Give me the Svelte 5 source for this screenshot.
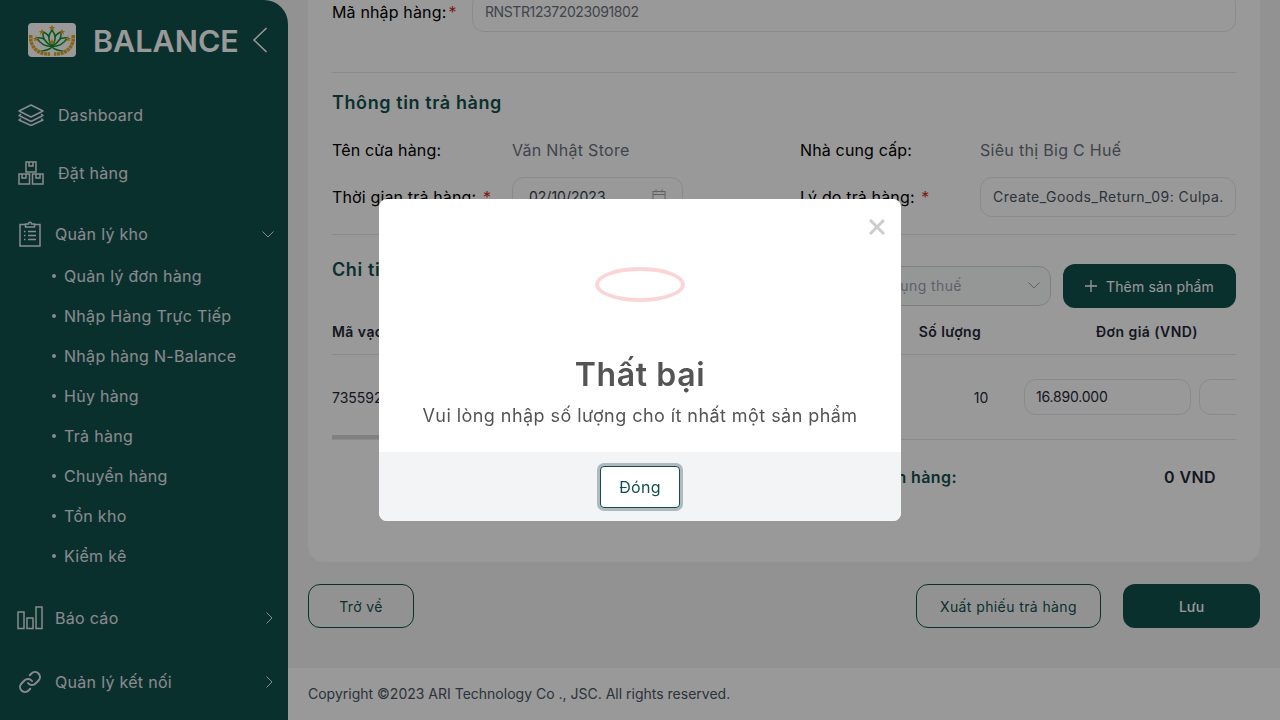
<script lang="ts">
	const subItems = ['Quản lý đơn hàng', 'Nhập Hàng Trực Tiếp', 'Nhập hàng N-Balance', 'Hủy hàng', 'Trả hàng', 'Chuyển hàng', 'Tồn kho', 'Kiểm kê'];
	const star = '0,-3 0.8,-1 3,-1 1.2,0.4 1.9,2.5 0,1.200 -1.900,2.500 -1.200,0.400 -3,-1 -0.800,-1';
	const stars = [[24, 5], [14, 9], [34, 9], [8, 16], [40, 16], [24, 19]];
</script>

<div class="layout">
	<aside class="sidebar">
		<div class="brand">
			<svg class="logo" width="48" height="34" viewBox="0 0 48 34">
				<rect width="48" height="34" rx="4" fill="#fff" />
				<g fill="none" stroke="#e0a526" stroke-width="3.500" stroke-dasharray="3 0.600">
					<path d="M3 12c-2 11 7 20 19 19" />
					<path d="M45 12c2 11-7 20-19 19" />
				</g>
				<g fill="#fff" stroke="#14912f" stroke-width="1.500">
					<path d="M9 15c3 6 9 9 15 8-3-5-9-9-15-8z" />
					<path d="M39 15c-3 6-9 9-15 8 3-5 9-9 15-8z" />
					<path d="M15 9c-1 6 3 11 9 14 0-6-3-12-9-14z" />
					<path d="M33 9c1 6-3 11-9 14 0-6 3-12 9-14z" />
					<path d="M24 7c-4 5-4 11 0 16 4-5 4-11 0-16z" />
				</g>
				<path d="M11 28c5-1 10-2 13-5 3 3 8 4 13 5-5 1-10 0-13-3-3 3-8 4-13 3z" fill="#14912f" />
				{#each stars as [x, y]}
					<polygon points={star} transform="translate({x} {y}) scale(1.100)" fill="#e0a526" />
				{/each}
			</svg>
			<span class="brand-name">BALANCE</span>
			<svg class="collapse" width="16" height="26" viewBox="0 0 16 26" fill="none" stroke="#fff" stroke-width="1.600">
				<path d="M14.500 1 2 13l12.500 12" />
			</svg>
		</div>

		<nav class="nav">
			<a class="nav-item first">
				<svg width="26" height="22" viewBox="0 0 26 22" fill="none" stroke="currentColor" stroke-width="1.500" stroke-linejoin="round">
					<path d="M13 1 25 7l-12 6L1 7z" />
					<path d="M3 10 1 11.500l12 6 12-6-2-1.500" />
					<path d="M3 14.500 1 16l12 5.500L25 16l-2-1.500" />
				</svg>
				<span>Dashboard</span>
			</a>
			<a class="nav-item second">
				<svg width="26" height="24" viewBox="0 0 26 24" fill="none" stroke="currentColor" stroke-width="1.500">
					<rect x="8" y="1" width="10" height="10" />
					<rect x="1" y="13" width="10.500" height="10" />
					<rect x="14.500" y="13" width="10.500" height="10" />
					<path d="M11 1v4h4V1M4 13v4h4v-4M18 13v4h4v-4" />
				</svg>
				<span>Đặt hàng</span>
			</a>

			<a class="nav-item group open">
				<svg width="22" height="26" viewBox="0 0 22 26" fill="none" stroke="currentColor" stroke-width="1.500">
					<path d="M6 3.500H1v21.500h20V3.500h-5" />
					<path d="M6.500 6V3h3c0-2.500 3-2.500 3 0h3v3z" />
					<path d="M9 10.500h8M9 14.500h8M9 18.500h8M5 10.500h1.500M5 14.500h1.500M5 18.500h1.500" />
				</svg>
				<span>Quản lý kho</span>
				<svg class="chevron" width="12" height="7" viewBox="0 0 12 7" fill="none" stroke="currentColor" stroke-width="1">
					<path d="m.5.5 5.500 5.500 5.500-5.500" />
				</svg>
			</a>
			<ul class="sub">
				{#each subItems as item}
					<li>{item}</li>
				{/each}
			</ul>

			<a class="nav-item group reports">
				<svg width="26" height="24" viewBox="0 0 26 24" fill="none" stroke="currentColor" stroke-width="1.500">
					<rect x="1" y="6" width="6" height="16.500" />
					<rect x="10" y="12" width="6" height="10.500" />
					<rect x="19" y="1" width="6" height="21.500" />
				</svg>
				<span>Báo cáo</span>
				<svg class="chevron side" width="7" height="12" viewBox="0 0 7 12" fill="none" stroke="currentColor" stroke-width="1">
					<path d="m.5.500 5.500 5.500-5.500 5.500" />
				</svg>
			</a>
			<a class="nav-item group connect">
				<svg width="24" height="24" viewBox="0 0 24 24" fill="none" stroke="currentColor" stroke-width="2" stroke-linecap="round">
					<path d="M10 13a5 5 0 0 0 7.540.540l3-3a5 5 0 0 0-7.070-7.070l-1.720 1.710" />
					<path d="M14 11a5 5 0 0 0-7.540-.540l-3 3a5 5 0 0 0 7.070 7.070l1.710-1.710" />
				</svg>
				<span>Quản lý kết nối</span>
				<svg class="chevron side" width="7" height="12" viewBox="0 0 7 12" fill="none" stroke="currentColor" stroke-width="1">
					<path d="m.5.500 5.500 5.500-5.500 5.500" />
				</svg>
			</a>
		</nav>
	</aside>

	<main class="main">
		<div class="content">
			<section class="card">
				<div class="code-row">
					<span class="field-label code-label">Mã nhập hàng:<b>*</b></span>
					<div class="input code-input">RNSTR12372023091802</div>
				</div>
				<hr class="code-line" />

				<h3 class="section-title">Thông tin trả hàng</h3>
				<div class="info-row">
					<span class="field-label">Tên cửa hàng:</span>
					<span class="value">Văn Nhật Store</span>
					<span class="field-label">Nhà cung cấp:</span>
					<span class="value">Siêu thị Big C Huế</span>
				</div>
				<div class="info-row inputs">
					<span class="field-label">Thời gian trả hàng: <b>*</b></span>
					<div class="input date-input">
						02/10/2023
						<svg width="14" height="14" viewBox="0 0 14 14" fill="none" stroke="#9ca3af" stroke-width="1">
							<rect x="1" y="2.500" width="12" height="11" />
							<path d="M1 5.500h12M4 .5v3M10 .5v3" />
						</svg>
					</div>
					<span class="field-label">Lý do trả hàng: <b>*</b></span>
					<div class="input reason-input">Create_Goods_Return_09: Culpa.</div>
				</div>
				<hr class="info-line" />

				<div class="detail-head">
					<h3 class="section-title">Chi tiết sản phẩm</h3>
					<div class="select">
						<span>Áp dụng thuế</span>
						<svg width="12" height="7" viewBox="0 0 12 7" fill="none" stroke="#9ca3af" stroke-width="1">
							<path d="m.5.5 5.500 5.500 5.500-5.500" />
						</svg>
					</div>
					<button class="btn-add">
						<svg width="12" height="12" viewBox="0 0 12 12" stroke="#fff" stroke-width="1.300"><path d="M6 0v12M0 6h12" /></svg>
						Thêm sản phẩm
					</button>
				</div>

				<div class="table-wrap">
					<div class="thead">
						<span>Mã vạch</span>
						<span class="center">Số lượng</span>
						<span class="center">Đơn giá (VND)</span>
					</div>
					<div class="tbody">
						<span>7355920184</span>
						<span class="qty">10</span>
						<div class="input cell-input">16.890.000</div>
						<div class="input cell-input"></div>
					</div>
					<div class="scrollbar"></div>
				</div>

				<div class="total">
					<span>Tổng tiền hàng:</span>
					<span class="total-value">0 VND</span>
				</div>
			</section>

			<div class="actions">
				<button class="btn-outline back">Trở về</button>
				<button class="btn-outline export">Xuất phiếu trả hàng</button>
				<button class="btn-save">Lưu</button>
			</div>
		</div>

		<footer class="footer">Copyright ©2023 ARI Technology Co ., JSC. All rights reserved.</footer>
	</main>
</div>

<div class="overlay">
	<div class="modal">
		<button class="close" aria-label="Đóng">
			<svg width="16" height="16" viewBox="0 0 16 16" stroke="#ccc" stroke-width="3"><path d="m1 1 14 14M15 1 1 15" /></svg>
		</button>
		<div class="modal-body">
			<div class="error-icon"></div>
			<h2>Thất bại</h2>
			<p>Vui lòng nhập số lượng cho ít nhất một sản phẩm</p>
		</div>
		<div class="modal-foot">
			<button class="btn-close">Đóng</button>
		</div>
	</div>
</div>

<style>
	:global(body) { font-family: Inter, "Noto Sans", sans-serif; background: #f3f4f6; overflow: hidden; }
	* { box-sizing: border-box; }
	h2, h3, p, ul { margin: 0; padding: 0; }
	hr { border: 0; border-top: 1px solid #e5e7eb; margin: 0; }
	button { font-family: inherit; cursor: pointer; }

	.layout { display: flex; height: 720px; overflow: hidden; }

	.sidebar { width: 288px; flex: none; height: 720px; background: #12504e; border-top-right-radius: 24px; color: #e5e7eb; overflow: hidden; }
	.brand { display: flex; align-items: center; height: 80px; padding-left: 28px; }
	.brand-name { margin-left: 17px; font-size: 30.5px; font-weight: 600; color: #fff; }
	.collapse { margin-left: 13px; }

	.nav-item { display: flex; align-items: center; height: 24px; font-size: 16px; letter-spacing: 0.3px; padding-left: 18px; }
	.nav-item span { margin-left: 14px; }
	.first { margin-top: 23px; }
	.second { margin-top: 34px; }
	.open { margin-top: 37px; padding-left: 19px; }
	.reports { margin-top: 30px; padding-left: 17px; }
	.reports span { margin-left: 12px; }
	.connect { margin-top: 40px; }
	.connect span { margin-left: 13px; }
	.chevron { margin-left: auto; margin-right: 14px; }
	.chevron.side { margin-right: 15px; }

	.sub { list-style: none; margin-top: 10px; }
	.sub li { position: relative; height: 40px; line-height: 40px; padding-left: 64px; font-size: 16px; letter-spacing: 0.3px; }
	.sub li::before { content: ""; position: absolute; left: 52px; top: 18px; width: 4px; height: 4px; border-radius: 50%; background: #e5e7eb; }

	.main { flex: 1; min-width: 0; display: flex; flex-direction: column; height: 720px; }
	.content { flex: 1; padding: 0 20px; margin-top: -32px; }

	.card { background: #fff; border-radius: 16px; padding: 24px 24px 73px; color: #000; font-size: 16px; }
	.code-row { display: flex; align-items: center; height: 40px; }
	.code-label { width: 140px; flex: none; }
	.field-label { color: #000; font-size: 16px; letter-spacing: 0.15px; }
	.field-label b { color: #dc2626; font-weight: 400; margin-left: 2px; }
	.input { border: 1px solid #e5e7eb; border-radius: 12px; font-size: 14px; color: #4b5563; display: flex; align-items: center; padding-bottom: 2px; }
	.code-input { flex: 1; height: 40px; padding-left: 12px; letter-spacing: -0.4px; color: #6b7280; }
	.code-line { margin-top: 40px; }
	.section-title { font-size: 18px; font-weight: 600; letter-spacing: 0.6px; color: #12504e; line-height: 28px; }
	.code-line + .section-title { margin-top: 16px; }

	.info-row { display: grid; grid-template-columns: 180px 288px 180px 1fr; align-items: center; margin-top: 21px; height: 24px; }
	.info-row .value { color: #6b7280; letter-spacing: 0.3px; }
	.info-row.inputs { margin-top: 15px; height: 40px; }
	.date-input { width: 171px; height: 40px; padding: 0 16px 2px; justify-content: space-between; color: #374151; }
	.reason-input { height: 40px; padding-left: 12px; letter-spacing: 0.45px; white-space: nowrap; overflow: hidden; }
	.info-line { margin-top: 17px; }

	.detail-head { display: flex; align-items: flex-start; margin-top: 29px; height: 44px; }
	.detail-head .section-title { margin-right: auto; margin-top: -8px; }
	.select { width: 200px; height: 40px; margin-top: 2px; border: 1px solid #d1d5db; border-radius: 12px; background: #f9fafb; display: flex; align-items: center; justify-content: space-between; padding: 0 10px 2px 16px; font-size: 14px; letter-spacing: 0.4px; color: #9ca3af; }
	.btn-add { width: 173px; height: 44px; margin-left: 12px; border: 0; border-radius: 12px; background: #12504e; color: #fff; font-size: 14px; letter-spacing: 0.15px; display: flex; align-items: center; justify-content: center; gap: 9px; }

	.table-wrap { position: relative; overflow: hidden; margin-top: 12px; border-bottom: 1px solid #e5e7eb; }
	.thead { display: grid; grid-template-columns: 558px 120px 274px; width: 952px; height: 34px; font-size: 14px; font-weight: 600; color: #1f2937; line-height: 24px; letter-spacing: 0.45px; }
	.center { text-align: center; }
	.tbody { display: flex; align-items: center; width: 1034px; height: 85px; border-top: 1px solid #e5e7eb; font-size: 14px; color: #1f2937; }
	.tbody > span:first-child { width: 612px; flex: none; }
	.qty { width: 74px; text-align: center; flex: none; }
	.cell-input { width: 167px; height: 36px; flex: none; margin-right: 8px; padding-left: 11px; color: #1f2937; margin-left: 6px; letter-spacing: -0.2px; }
	.cell-input + .cell-input { margin-left: 0; }
	.scrollbar { position: absolute; left: 0; bottom: 0; width: 300px; height: 4px; background: #d8d8d8; }

	.total { display: flex; justify-content: space-between; padding: 27px 20px 0 499px; height: 49px; font-size: 16px; font-weight: 600; letter-spacing: 0.4px; color: #12504e; }
	.total-value { color: #1f2937; }

	.actions { display: flex; align-items: center; margin-top: 22px; }
	.btn-outline { height: 44px; border: 1px solid #12504e; border-radius: 12px; background: #fff0; color: #12504e; font-size: 14px; letter-spacing: 0.4px; }
	.back { width: 106px; margin-right: auto; }
	.export { width: 185px; }
	.btn-save { width: 137px; height: 44px; margin-left: 22px; border: 0; border-radius: 12px; background: #12504e; color: #fff; font-size: 14px; font-weight: 500; }

	.footer { height: 52px; flex: none; background: #fff; padding-left: 20px; font-size: 14px; line-height: 52px; color: #4b5563; }

	.overlay { position: fixed; inset: 0; background: rgba(0, 0, 0, 0.4); display: flex; align-items: center; justify-content: center; }
	.modal { position: relative; width: 522px; height: 322px; background: #fff; border-radius: 8px; overflow: hidden; display: flex; flex-direction: column; }
	.close { position: absolute; right: 16px; top: 20px; border: 0; background: none; padding: 0; width: 16px; height: 16px; display: flex; }
	.modal-body { flex: 1; display: flex; flex-direction: column; align-items: center; color: #545454; }
	.error-icon { width: 90px; height: 35px; margin-top: 68px; border: 4px solid #fbd5d5; border-radius: 50%; }
	h2 { margin-top: 50px; font-size: 32px; font-weight: 600; letter-spacing: 0.6px; line-height: 46px; }
	p { margin-top: 5px; font-size: 18px; letter-spacing: 0.44px; line-height: 26px; }
	.modal-foot { height: 69px; background: #f3f4f6; display: flex; align-items: center; justify-content: center; }
	.btn-close { width: 80px; height: 42px; border: 1px solid #12504e; border-radius: 4px; background: #fff; color: #12504e; font-size: 16px; letter-spacing: 0.3px; box-shadow: 0 0 0 3px #b0b8c0; }
</style>
